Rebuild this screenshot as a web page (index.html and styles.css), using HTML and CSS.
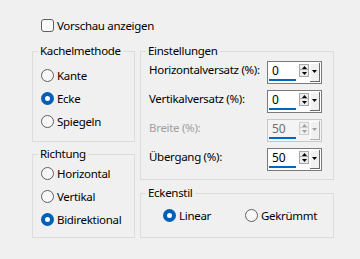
FILE: index.html
```html
<!DOCTYPE html>
<html lang="de">
<head>
    <meta charset="UTF-8">
    <meta name="viewport" content="width=device-width, initial-scale=1.0">
    <title>Kacheln</title>
    <link rel="stylesheet" href="styles.css">
</head>
<body>
    <label class="check-row">
        <input type="checkbox" class="check">
        <span>Vorschau anzeigen</span>
    </label>
    <div class="columns">
        <div class="col-left">
            <fieldset class="group group-method">
                <legend>Kachelmethode</legend>
                <label class="radio-row"><input type="radio" name="method" class="radio"><span>Kante</span></label>
                <label class="radio-row"><input type="radio" name="method" class="radio" checked><span>Ecke</span></label>
                <label class="radio-row"><input type="radio" name="method" class="radio"><span>Spiegeln</span></label>
            </fieldset>
            <fieldset class="group group-direction">
                <legend>Richtung</legend>
                <label class="radio-row"><input type="radio" name="dir" class="radio"><span>Horizontal</span></label>
                <label class="radio-row"><input type="radio" name="dir" class="radio"><span>Vertikal</span></label>
                <label class="radio-row"><input type="radio" name="dir" class="radio" checked><span>Bidirektional</span></label>
            </fieldset>
        </div>
        <div class="col-right">
            <fieldset class="group group-settings">
                <legend>Einstellungen</legend>
                <div class="field-row">
                    <span class="field-label">Horizontalversatz (%):</span>
                    <div class="spin">
                        <span class="spin-value">0</span>
                        <span class="spin-arrows">
                            <span class="arrow-btn"><svg width="5" height="3" viewBox="0 0 5 3"><path d="M0 3 L2.5 0 L5 3 Z" fill="#000"/></svg></span>
                            <span class="arrow-btn"><svg width="5" height="3" viewBox="0 0 5 3"><path d="M0 0 L2.5 3 L5 0 Z" fill="#000"/></svg></span>
                        </span>
                        <span class="spin-drop"><svg width="5" height="3" viewBox="0 0 5 3"><path d="M0 0 L2.5 3 L5 0 Z" fill="#000"/></svg></span>
                    </div>
                </div>
                <div class="field-row">
                    <span class="field-label">Vertikalversatz (%):</span>
                    <div class="spin">
                        <span class="spin-value">0</span>
                        <span class="spin-arrows">
                            <span class="arrow-btn"><svg width="5" height="3" viewBox="0 0 5 3"><path d="M0 3 L2.5 0 L5 3 Z" fill="#000"/></svg></span>
                            <span class="arrow-btn"><svg width="5" height="3" viewBox="0 0 5 3"><path d="M0 0 L2.5 3 L5 0 Z" fill="#000"/></svg></span>
                        </span>
                        <span class="spin-drop"><svg width="5" height="3" viewBox="0 0 5 3"><path d="M0 0 L2.5 3 L5 0 Z" fill="#000"/></svg></span>
                    </div>
                </div>
                <div class="field-row disabled">
                    <span class="field-label">Breite (%):</span>
                    <div class="spin">
                        <span class="spin-value">50</span>
                        <span class="spin-arrows">
                            <span class="arrow-btn"><svg width="5" height="3" viewBox="0 0 5 3"><path d="M0 3 L2.5 0 L5 3 Z" fill="#a0a0a0"/></svg></span>
                            <span class="arrow-btn"><svg width="5" height="3" viewBox="0 0 5 3"><path d="M0 0 L2.5 3 L5 0 Z" fill="#a0a0a0"/></svg></span>
                        </span>
                        <span class="spin-drop"><svg width="5" height="3" viewBox="0 0 5 3"><path d="M0 0 L2.5 3 L5 0 Z" fill="#a0a0a0"/></svg></span>
                    </div>
                </div>
                <div class="field-row">
                    <span class="field-label">Übergang (%):</span>
                    <div class="spin">
                        <span class="spin-value">50</span>
                        <span class="spin-arrows">
                            <span class="arrow-btn"><svg width="5" height="3" viewBox="0 0 5 3"><path d="M0 3 L2.5 0 L5 3 Z" fill="#000"/></svg></span>
                            <span class="arrow-btn"><svg width="5" height="3" viewBox="0 0 5 3"><path d="M0 0 L2.5 3 L5 0 Z" fill="#000"/></svg></span>
                        </span>
                        <span class="spin-drop"><svg width="5" height="3" viewBox="0 0 5 3"><path d="M0 0 L2.5 3 L5 0 Z" fill="#000"/></svg></span>
                    </div>
                </div>
            </fieldset>
            <fieldset class="group group-corner">
                <legend>Eckenstil</legend>
                <div class="corner-options">
                    <label class="radio-row"><input type="radio" name="corner" class="radio" checked><span>Linear</span></label>
                    <label class="radio-row"><input type="radio" name="corner" class="radio"><span>Gekrümmt</span></label>
                </div>
            </fieldset>
        </div>
    </div>
</body>
</html>
```

FILE: styles.css
```css
body {
    margin: 0;
    padding: 14px 0 0 32px;
    background-color: #f0f0f0;
    font-family: "Noto Sans", sans-serif;
    font-size: 11.5px;
    letter-spacing: -0.3px;
    color: #000;
}
.check-row {
    display: flex;
    align-items: center;
    height: 23px;
    margin-left: 9px;
}
.check {
    appearance: none;
    width: 13px;
    height: 13px;
    margin: 0 3px 0 0;
    border: 1px solid #5f5f5f;
    border-radius: 3px;
    background-color: #f9f9f9;
    box-sizing: border-box;
}
.columns {
    display: flex;
    gap: 5px;
    margin-top: 6px;
}
.col-left {
    width: 103px;
    display: flex;
    flex-direction: column;
    gap: 4px;
}
.col-right {
    width: 194px;
    display: flex;
    flex-direction: column;
    gap: 5px;
}
.group {
    margin: 0;
    min-width: 0;
    border: 1px solid #dcdcdc;
    padding: 0 0 0 8px;
}
.group legend {
    margin-left: -3px;
    padding: 0 2px;
    line-height: 16px;
}
.group-method {
    padding-top: 5px;
    padding-bottom: 8px;
}
.group-direction {
    padding-top: 0;
    padding-bottom: 6px;
}
.group-settings {
    padding-top: 2px;
    padding-bottom: 8px;
}
.group-corner {
    padding-top: 3px;
    padding-bottom: 10px;
}
.radio-row {
    display: flex;
    align-items: center;
    height: 23px;
    white-space: nowrap;
}
.radio {
    appearance: none;
    width: 13px;
    height: 13px;
    margin: 0 3px 0 0;
    border: 1px solid #5f5f5f;
    border-radius: 50%;
    background-color: #f7f7f7;
    box-sizing: border-box;
}
.radio:checked {
    border: 4px solid #005fb8;
    background-color: #fff;
}
.corner-options {
    display: flex;
    padding-left: 14px;
}
.corner-options .radio-row:first-child {
    width: 82px;
}
.field-row {
    display: flex;
    align-items: flex-start;
    height: 23px;
    margin-bottom: 6px;
}
.field-row:last-child {
    margin-bottom: 0;
}
.field-label {
    width: 118px;
    line-height: 17px;
    white-space: nowrap;
}
.spin {
    display: flex;
    width: 55px;
    height: 23px;
    box-sizing: border-box;
    border: 1px solid #7a7a7a;
    background-color: #fff;
}
.spin-value {
    width: 24px;
    margin-left: 1px;
    padding-left: 3px;
    line-height: 18px;
    height: 17px;
    border-bottom: 2px solid #0067c0;
    font-size: 12px;
    letter-spacing: 0;
}
.spin-arrows {
    display: flex;
    flex-direction: column;
    margin: 2px 0 0 3px;
}
.arrow-btn {
    display: flex;
    align-items: center;
    justify-content: center;
    width: 10px;
    height: 6px;
    box-sizing: border-box;
    border: 1px solid #a8a8a8;
    background-color: #ececec;
}
.arrow-btn + .arrow-btn {
    height: 7px;
    border-top: none;
}
.spin-drop {
    display: flex;
    justify-content: center;
    padding-top: 7px;
    box-sizing: border-box;
    width: 10px;
    height: 19px;
    margin: 1px 0 0 1px;
    background-color: #f0f0f0;
    border-right: 1px solid #696969;
    border-bottom: 1px solid #696969;
    box-shadow: inset 1px 1px 0 #fff;
}
.disabled .field-label {
    color: #a0a0a0;
}
.disabled .spin {
    border-color: #c8c8c8;
    background-color: #f4f4f4;
}
.disabled .spin-value {
    color: #6d6d6d;
}
.disabled .arrow-btn {
    border-color: #d0d0d0;
    background-color: #f0f0f0;
}
.disabled .spin-drop {
    border-color: #b0b0b0;
}
```
